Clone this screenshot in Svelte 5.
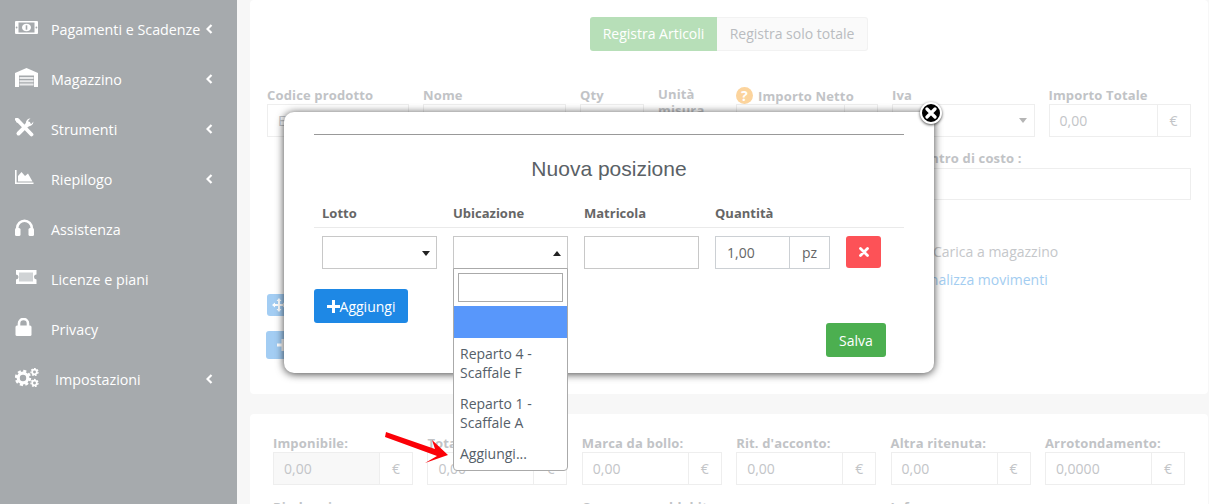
<script>
  const navItems = [
    { label: 'Pagamenti e Scadenze', icon: 'money', chevron: true },
    { label: 'Magazzino', icon: 'store', chevron: true },
    { label: 'Strumenti', icon: 'tools', chevron: true },
    { label: 'Riepilogo', icon: 'chart', chevron: true },
    { label: 'Assistenza', icon: 'phones', chevron: false },
    { label: 'Licenze e piani', icon: 'ticket', chevron: false },
    { label: 'Privacy', icon: 'lock', chevron: false },
    { label: 'Impostazioni', icon: 'cogs', chevron: true, wide: true }
  ];
  const topFields = [
    { label: 'Codice prodotto', value: 'E', kind: 'text' },
    { label: 'Nome', value: '', kind: 'text' },
    { label: 'Qty', value: '', kind: 'text' },
    { label: 'Unità misura', value: '', kind: 'none' },
    { label: 'Importo Netto', value: '', kind: 'euro', help: true },
    { label: 'Iva', value: '', kind: 'select' },
    { label: 'Importo Totale', value: '0,00', kind: 'euro' }
  ];
  const totals = [
    { label: 'Imponibile:', value: '0,00', off: true },
    { label: 'Totale:', value: '0,00' },
    { label: 'Marca da bollo:', value: '0,00' },
    { label: "Rit. d'acconto:", value: '0,00' },
    { label: 'Altra ritenuta:', value: '0,00' },
    { label: 'Arrotondamento:', value: '0,0000' }
  ];
  const footLabels = ['Rimborsi', '', 'Commessa addebito', '', 'Info', ''];
</script>

<div class="page">
  <aside class="sidebar">
    {#each navItems as item}
      <div class="nav-item">
        <span class="nav-icon">
          {#if item.icon === 'money'}
            <svg width="23" height="13" viewBox="0 0 23 13"><rect width="23" height="13" rx="1" fill="#fff"/><rect x="3.500" y="1.500" width="16" height="10" fill="#a6aaad"/><ellipse cx="11.500" cy="6.500" rx="4.500" ry="3.800" fill="#fff"/><rect x="10.700" y="4.300" width="1.600" height="4.400" fill="#a6aaad"/><circle cx="1.600" cy="6.500" r=".9" fill="#a6aaad"/><circle cx="21.400" cy="6.500" r=".9" fill="#a6aaad"/></svg>
          {:else if item.icon === 'store'}
            <svg width="23" height="19" viewBox="0 0 23 19"><path d="M0 5 11.500 0 23 5V19H0Z" fill="#fff"/><path d="M4 7.500h15V19H4Z" fill="#a6aaad"/><path d="M4.500 9h14v2h-14zM4.500 12.300h14v2h-14zM4.500 15.600h14v2h-14z" fill="#e9eaeb"/></svg>
          {:else if item.icon === 'tools'}
            <svg width="19" height="19" viewBox="0 0 19 19"><path d="M2 1.500 16.500 16.500" stroke="#fff" stroke-width="3.800" stroke-linecap="round"/><path d="M0 0 4.500 1.500 5 5 1.500 4.500Z" fill="#fff"/><path d="M3.500 15.500 13.500 5.500" stroke="#fff" stroke-width="4" stroke-linecap="round"/><path d="M18.500 3.500A5 5 0 0 1 11.500 8 5 5 0 0 1 15.500.3L13 3 14 5.300 16.300 6Z" fill="#fff"/></svg>
          {:else if item.icon === 'chart'}
            <svg width="19" height="14" viewBox="0 0 19 14"><path d="M0 0h1.600V12.500H18.500V14H0Z" fill="#fff"/><path d="M3 11.500V6L6.500 2 10 6 13 3.500 17.500 11.500Z" fill="#fff"/></svg>
          {:else if item.icon === 'phones'}
            <svg width="19" height="17" viewBox="0 0 19 17"><path d="M2.200 10.500V9a7.300 7.300 0 0 1 14.600 0V10.500" fill="none" stroke="#fff" stroke-width="2.600"/><rect x="0" y="9" width="5.500" height="8" rx="1.500" fill="#fff"/><rect x="13.500" y="9" width="5.500" height="8" rx="1.500" fill="#fff"/></svg>
          {:else if item.icon === 'ticket'}
            <svg width="22" height="14" viewBox="0 0 22 14"><path d="M1 0H21.500V4.500A2.500 2.500 0 0 0 21.500 9.500V14H1V9.500A2.500 2.500 0 0 0 1 4.500Z" fill="#fff"/><rect x="4" y="2.500" width="14" height="9" fill="#d0d3d5"/></svg>
          {:else if item.icon === 'lock'}
            <svg width="17" height="18" viewBox="0 0 17 18"><path d="M4 8V5.500a4.500 4.500 0 0 1 9 0V8" fill="none" stroke="#fff" stroke-width="2.600"/><rect x="0.500" y="7.500" width="16" height="10.500" rx="1.500" fill="#fff"/></svg>
          {:else}
            <svg width="24" height="19" viewBox="0 0 24 19"><circle cx="8" cy="10" r="4.800" fill="none" stroke="#fff" stroke-width="3.200"/><circle cx="8" cy="10" r="7" fill="none" stroke="#fff" stroke-width="2.400" stroke-dasharray="3.100 2.400"/><circle cx="19.500" cy="4" r="2.300" fill="none" stroke="#fff" stroke-width="1.700"/><circle cx="19.500" cy="4" r="3.500" fill="none" stroke="#fff" stroke-width="1.300" stroke-dasharray="1.800 1.300"/><circle cx="19.500" cy="15" r="2.300" fill="none" stroke="#fff" stroke-width="1.700"/><circle cx="19.500" cy="15" r="3.500" fill="none" stroke="#fff" stroke-width="1.300" stroke-dasharray="1.800 1.300"/></svg>
          {/if}
        </span>
        <span class="nav-label" class:wide={item.wide}>{item.label}</span>
        {#if item.chevron}
          <svg class="chev" width="7" height="10" viewBox="0 0 7 10"><path d="M5.500 1 1.500 5l4 4" fill="none" stroke="#fff" stroke-width="2.200"/></svg>
        {/if}
      </div>
    {/each}
  </aside>

  <main class="content">
    <section class="card top-card">
      <div class="toggle">
        <span class="toggle-on">Registra Articoli</span>
        <span class="toggle-off">Registra solo totale</span>
      </div>

      <div class="fields">
        {#each topFields as f}
          <div class="field">
            <div class="flabel">
              {#if f.help}<span class="help">?</span>{/if}{f.label}
            </div>
            {#if f.kind === 'text'}
              <div class="fbox"><span class="fval">{f.value}</span></div>
            {:else if f.kind === 'euro'}
              <div class="fbox"><span class="fval">{f.value}</span><span class="cur">€</span></div>
            {:else if f.kind === 'select'}
              <div class="fbox"><span class="fval"></span><span class="caret"></span></div>
            {/if}
          </div>
        {/each}
      </div>

      <div class="lower">
        <div class="left-btns">
          <div class="ghost-btn small">
            <svg width="14" height="14" viewBox="0 0 14 14"><path d="M7 0 9.500 3H8V6H11V4.500L14 7 11 9.500V8H8V11H9.500L7 14 4.500 11H6V8H3V9.500L0 7 3 4.500V6H6V3H4.500Z" fill="#fff"/></svg>
          </div>
          <div class="ghost-btn big">
            <svg width="14" height="14" viewBox="0 0 14 14"><path d="M5.500 1h3v4.500H13v3H8.500V13h-3V8.500H1v-3h4.500Z" fill="#fff"/></svg>
          </div>
        </div>
        <div class="right-col">
          <div class="flabel cost">Centro di costo :</div>
          <div class="fbox tall"></div>
          <div class="check-line">Carica a magazzino</div>
          <div class="link-line">Analizza movimenti</div>
        </div>
      </div>
    </section>

    <section class="card bottom-card">
      <div class="totals">
        {#each totals as t}
          <div class="field">
            <div class="flabel">{t.label}</div>
            <div class="fbox"><span class="fval" class:off={t.off}>{t.value}</span><span class="cur">€</span></div>
          </div>
        {/each}
        {#each footLabels as l}
          <div class="flabel foot">{l}</div>
        {/each}
      </div>
    </section>
  </main>

  <div class="modal">
    <button class="close" aria-label="Chiudi">
      <svg width="12" height="12" viewBox="0 0 12 12"><path d="M2 2l8 8M10 2l-8 8" stroke="#fff" stroke-width="3.200" stroke-linecap="round"/></svg>
    </button>
    <hr class="rule" />
    <h2 class="title">Nuova posizione</h2>

    <div class="grid head">
      <div>Lotto</div><div>Ubicazione</div><div>Matricola</div><div>Quantità</div><div></div>
    </div>
    <div class="grid row">
      <div class="cell"><div class="sel"><span class="arrow down"></span></div></div>
      <div class="cell drop-host">
        <div class="sel"><span class="arrow up"></span></div>
        <div class="dropdown">
          <div class="search"><div class="search-box"></div></div>
          <div class="opt active"></div>
          <div class="opt">Reparto 4 - Scaffale F</div>
          <div class="opt">Reparto 1 - Scaffale A</div>
          <div class="opt last">Aggiungi...</div>
        </div>
      </div>
      <div class="cell"><div class="sel"></div></div>
      <div class="cell">
        <div class="qty"><span class="qty-val">1,00</span><span class="qty-unit">pz</span></div>
      </div>
      <div class="cell">
        <button class="del" aria-label="Elimina">
          <svg width="10" height="10" viewBox="0 0 10 10"><path d="M1.500 1.500l7 7M8.500 1.500l-7 7" stroke="#fff" stroke-width="2.800" stroke-linecap="round"/></svg>
        </button>
      </div>
    </div>

    <button class="add">
      <svg width="13" height="13" viewBox="0 0 13 13"><path d="M5 0h3v5h5v3H8v5H5V8H0V5h5Z" fill="#fff"/></svg>Aggiungi
    </button>
    <div class="save-row"><button class="save">Salva</button></div>
  </div>

  <svg class="red-arrow" width="66" height="36" viewBox="0 0 66 36">
    <path d="M1 0 50 17 47 8 63 23 40 31 52 24 0 5Z" fill="#fb0007"/>
  </svg>
</div>

<style>
  :global(body) {
    margin: 0;
    font-family: "Open Sans", sans-serif;
  }
  .page {
    position: relative;
    display: flex;
    width: 1209px;
    height: 504px;
    overflow: hidden;
    background: #f7f7f7;
    font-size: 14px;
  }

  /* sidebar */
  .sidebar {
    width: 237px;
    flex: none;
    padding-top: 4px;
    background: #a6aaad;
    box-sizing: border-box;
  }
  .nav-item {
    display: flex;
    align-items: center;
    height: 50px;
    padding-left: 15px;
    color: #fff;
  }
  .nav-icon {
    display: flex;
    align-items: center;
    width: 36px;
    height: 20px;
    flex: none;
    position: relative;
    top: -2px;
  }
  .nav-label {
    flex: 1;
    white-space: nowrap;
    font-size: 14.300px;
  }
  .nav-label.wide {
    padding-left: 4px;
  }
  .chev {
    margin-right: 24px;
    flex: none;
  }

  /* background */
  .content {
    flex: 1;
    display: flex;
    flex-direction: column;
    padding: 0 1px 0 13px;
    gap: 20px;
    min-width: 0;
  }
  .card {
    background: #fff;
    border-radius: 4px;
    box-sizing: border-box;
  }
  .top-card {
    height: 394px;
    padding: 17px 17px 0;
    flex: none;
  }
  .bottom-card {
    flex: 1;
    padding: 21px 23px 0;
  }
  .toggle {
    display: flex;
    justify-content: center;
    height: 34px;
    line-height: 34px;
  }
  .toggle-on {
    width: 127px;
    text-align: center;
    background: #b7dfb8;
    color: #fff;
    border-radius: 3px 0 0 3px;
  }
  .toggle-off {
    width: 151px;
    text-align: center;
    background: #fafafa;
    border: 1px solid #f2f2f2;
    border-left: 0;
    box-sizing: border-box;
    line-height: 32px;
    color: #b9bcc0;
    border-radius: 0 3px 3px 0;
  }
  .fields {
    display: grid;
    grid-template-columns: 142px 143px 64px 64px 142px 142.500px 142px;
    column-gap: 14px;
    margin-top: 36px;
  }
  .flabel {
    height: 17px;
    line-height: 17px;
    font-size: 13px;
    font-weight: 700;
    letter-spacing: 0.150px;
    color: #c1c3c6;
    white-space: nowrap;
  }
  .fields .field:nth-child(4) .flabel {
    white-space: normal;
    position: relative;
    top: -1px;
    line-height: 16px;
  }
  .help {
    display: inline-block;
    width: 17px;
    height: 17px;
    margin-right: 5px;
    border-radius: 50%;
    background: #fcd49d;
    color: #fff;
    text-align: center;
    font-size: 14px;
    line-height: 17px;
  }
  .fbox {
    display: flex;
    align-items: center;
    height: 33px;
    border: 1px solid #eeeeee;
    box-sizing: border-box;
    color: #c3c5c8;
  }
  .fval {
    flex: 1;
    padding-left: 10px;
    min-width: 0;
    line-height: 31px;
  }
  .fval.off {
    background: #f8f8f8;
  }
  .cur {
    width: 33px;
    box-sizing: border-box;
    flex: none;
    text-align: center;
    line-height: 31px;
    border-left: 1px solid #eeeeee;
  }
  .caret {
    width: 0;
    height: 0;
    margin-right: 7px;
    border-left: 4px solid transparent;
    border-right: 4px solid transparent;
    border-top: 5px solid #b5b5b5;
  }
  .lower {
    display: grid;
    grid-template-columns: 1fr 299px;
    column-gap: 7px;
    margin-top: 13px;
  }
  .left-btns {
    padding-top: 144px;
  }
  .ghost-btn {
    display: flex;
    align-items: center;
    background: #a3cdf3;
    border-radius: 3px;
  }
  .ghost-btn.small {
    width: 36px;
    height: 22px;
    padding-left: 5px;
    box-sizing: border-box;
  }
  .ghost-btn.big {
    width: 38px;
    height: 28px;
    padding-left: 10px;
    box-sizing: border-box;
    margin: 15px 0 0 -1px;
  }
  .cost {
    padding-left: 22px;
  }
  .fbox.tall {
    height: 32px;
    margin-top: 1px;
  }
  .check-line,
  .link-line {
    height: 19px;
    line-height: 19px;
    color: #c5c7ca;
    white-space: nowrap;
  }
  .check-line {
    margin-top: 42px;
    padding-left: 41px;
  }
  .link-line {
    margin-top: 9px;
    padding-left: 29px;
    color: #a3cdf1;
  }
  .totals {
    display: grid;
    grid-template-columns: repeat(6, 1fr);
    column-gap: 14.400px;
  }
  .totals .fbox {
    align-items: stretch;
  }
  .foot {
    margin-top: 14px;
  }

  /* modal */
  .modal {
    position: absolute;
    left: 284px;
    top: 112px;
    width: 650px;
    height: 261px;
    box-sizing: border-box;
    padding: 22px 30px 0;
    background: #fff;
    border-radius: 10px;
    box-shadow: 0 1px 9px rgba(0, 0, 0, 0.75);
    color: #666;
  }
  .close {
    position: absolute;
    right: -8px;
    top: -10px;
    width: 22px;
    height: 22px;
    padding: 0;
    display: flex;
    align-items: center;
    justify-content: center;
    background: #000;
    border: 2px solid #fff;
    border-radius: 50%;
    box-sizing: border-box;
    box-shadow: 0 1px 3px rgba(0, 0, 0, 0.7);
  }
  .rule {
    margin: 0;
    border: 0;
    border-top: 1px solid #999;
  }
  .title {
    margin: 21px 0 0;
    text-align: center;
    font: 400 21px/26px "Liberation Sans", sans-serif;
    color: #5a6166;
  }
  .grid {
    display: grid;
    grid-template-columns: repeat(4, 131px) 1fr;
  }
  .head {
    margin-top: 18px;
    line-height: 17px;
    padding-top: 5px;
    box-sizing: border-box;
    height: 28px;
    border-bottom: 1px solid #eaeaea;
    font-size: 13px;
    font-weight: 700;
  }
  .head > div {
    padding-left: 8px;
  }
  .row {
    padding-top: 8px;
  }
  .cell {
    padding-left: 8px;
    position: relative;
  }
  .sel {
    position: relative;
    width: 115px;
    height: 33px;
    border: 1px solid #c8c8c8;
    box-sizing: border-box;
  }
  .arrow {
    position: absolute;
    right: 6px;
    top: 14px;
    width: 0;
    height: 0;
    border-left: 4px solid transparent;
    border-right: 4px solid transparent;
  }
  .arrow.down {
    border-top: 5px solid #222;
  }
  .arrow.up {
    border-bottom: 5px solid #222;
  }
  .dropdown {
    position: absolute;
    left: 8px;
    top: 32px;
    width: 115px;
    box-sizing: border-box;
    background: #fff;
    border: 1px solid #aaa;
    border-radius: 0 0 4px 4px;
    color: #556069;
    line-height: 19px;
    z-index: 2;
  }
  .search {
    padding: 4px;
  }
  .search-box {
    height: 29px;
    box-sizing: border-box;
    border: 1px solid #aaa;
  }
  .opt {
    padding: 6px;
  }
  .opt.active {
    height: 32px;
    box-sizing: border-box;
    background: #5897fb;
  }
  .opt.last {
    padding-bottom: 7px;
  }
  .qty {
    display: flex;
    width: 115px;
    height: 33px;
    box-sizing: border-box;
    border: 1px solid #ccd0d4;
    line-height: 31px;
  }
  .qty-val {
    flex: 1;
    padding-left: 11px;
  }
  .qty-unit {
    width: 40px;
    box-sizing: border-box;
    text-align: center;
    border-left: 1px solid #ccd0d4;
  }
  .del {
    display: flex;
    align-items: center;
    justify-content: center;
    width: 35px;
    height: 32px;
    padding: 0;
    border: 0;
    border-radius: 3px;
    background: #fd5257;
  }
  .add {
    display: flex;
    align-items: center;
    justify-content: center;
    width: 94px;
    height: 34px;
    margin-top: 20px;
    padding: 0;
    border: 0;
    border-radius: 3px;
    background: #1e88e5;
    color: #fff;
    font: 400 14px "Open Sans", sans-serif;
  }
  .save-row {
    display: flex;
    justify-content: flex-end;
    margin: 0 18px 0 0;
  }
  .save {
    width: 60px;
    height: 34px;
    padding: 0;
    border: 0;
    border-radius: 3px;
    background: #4caf50;
    color: #fff;
    font: 400 14px "Open Sans", sans-serif;
  }
  .red-arrow {
    position: absolute;
    left: 385px;
    top: 432px;
  }
</style>
